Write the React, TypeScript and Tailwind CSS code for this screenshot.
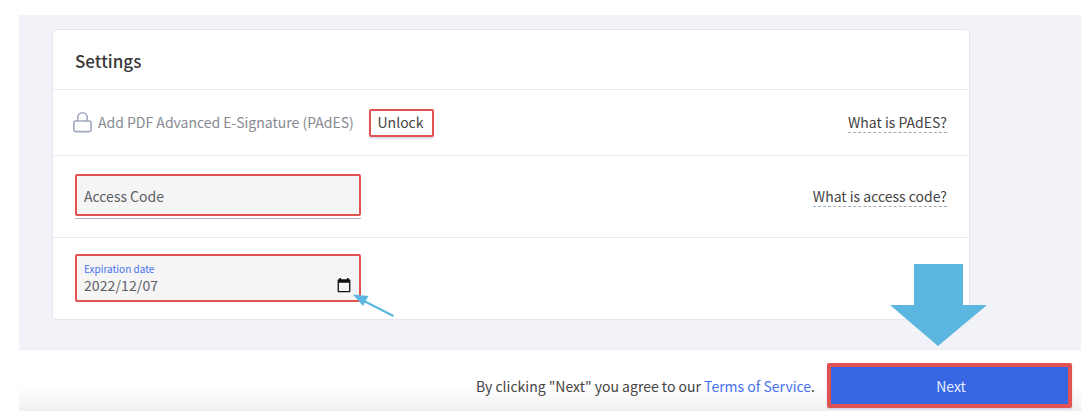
import React from 'react';

function LockIcon() {
  return (
    <svg className="w-5 h-[21px] mb-px shrink-0" viewBox="0 0 20 21" fill="none" stroke="#a0a8bf" strokeWidth="1.6">
      <rect x="0.9" y="9" width="17.2" height="10.6" rx="1.6" />
      <path d="M4.8 9V5.500a4.700 4.700 0 0 1 9.400 0V9" />
    </svg>
  );
}

function CalendarIcon() {
  return (
    <svg className="w-[14px] h-[15px] shrink-0" viewBox="0 0 14 15">
      <path d="M2.4 0h1.6v2H2.4zM10 0h1.6v2H10z" fill="#111" />
      <path d="M2 1.2h10c.8 0 1.4.6 1.4 1.3V13c0 .7-.6 1.3-1.4 1.3H2c-.8 0-1.4-.6-1.4-1.3V2.5c0-.7.6-1.3 1.4-1.3zM1.9 4.8V13h10.2V4.8z" fill="#111" fillRule="evenodd" />
    </svg>
  );
}

function HelpLink({ children, className = '' }: { children: React.ReactNode; className?: string }) {
  return (
    <a href="#" className={`h-[22px] leading-[22px] border-b border-dashed border-[#a5abb8] text-[#444] whitespace-nowrap ${className}`}>
      {children}
    </a>
  );
}

export default function App() {
  return (
    <div className="relative w-[1086px] h-[420px] overflow-hidden bg-white pl-[19px] pt-[15px] pr-[5px] font-['Noto_Sans_CJK_SC','Noto_Sans',sans-serif] text-sm text-[#444]">
      <main className="h-[335px] bg-[#f2f3f8] border-b border-[#eceef4] pl-[33px] pt-[14px]">
        <section className="w-[918px] h-[291px] bg-white border border-[#e3e5ef] rounded">
          <div className="h-[60px] px-[22px] flex items-center border-b border-[#e8e9f1]">
            <h2 className="text-[17px] font-medium leading-6 text-[#383838] pt-[3px]">Settings</h2>
          </div>

          <div className="h-[66px] pl-5 pr-[22px] flex items-center justify-between border-b border-[#e8e9f1]">
            <div className="flex items-center">
              <LockIcon />
              <span className="ml-[5px] w-[256px] leading-5 pb-px text-[#868a91] whitespace-nowrap">Add PDF Advanced E-Signature (PAdES)</span>
              <button className="ml-[15px] w-[65px] h-7 border-2 border-[#e35252] rounded-xs shadow-[0_2px_2px_#dcdfeb] pr-0.5 leading-[22px] pb-0.5 text-[#444]">
                Unlock
              </button>
            </div>
            <HelpLink className="mb-0.5">What is PAdES?</HelpLink>
          </div>

          <div className="h-[82px] px-[22px] pt-[18px] flex justify-between border-b border-[#e8e9f1]">
            <div className="w-[286px] h-[45px] border-b border-[#b0b5cd]">
              <div className="h-[42px] px-[7px] pt-0.5 flex items-center bg-[#f5f5f5] border-2 border-[#e35252] rounded-xs text-[#5c6066]">
                Access Code
              </div>
            </div>
            <HelpLink className="mt-[11px]">What is access code?</HelpLink>
          </div>

          <div className="px-[22px] pt-4">
            <div className="w-[286px] h-12 pl-[7px] pr-[8px] flex justify-between bg-[#f5f5f5] border-2 border-[#e35252] rounded-xs">
              <div className="pt-[5px]">
                <label className="block text-[10px] leading-[15px] text-[#4771ee]">Expiration date</label>
                <span className="block leading-[19px] tracking-[0.1px] text-[#5c6066]">2022/12/07</span>
              </div>
              <div className="pt-[22px]">
                <CalendarIcon />
              </div>
            </div>
          </div>
        </section>
      </main>

      <footer className="h-[61px] flex justify-end pr-[9px] pt-[13px] bg-linear-to-b from-white from-60% to-[#f0f0f0]">
        <p className="mr-3 h-[46px] leading-[46px] whitespace-nowrap">
          By clicking "Next" you agree to our{' '}
          <a href="#" className="text-[#4771ee]">Terms of Service</a>.
        </p>
        <button className="w-[245px] h-[45px] bg-[#3766e3] border-4 border-[#e35252] rounded-xs shadow-[0_1px_2px_#c9cce5] pl-[3px] text-[#e6ecff]">
          Next
        </button>
      </footer>

      {/* callout arrows sit on top of the form */}
      <svg className="absolute inset-0 pointer-events-none" width="1086" height="420" viewBox="0 0 1086 420">
        <path d="M914 264h49v41h24l-49 41-48-41h24z" fill="#5bb7df" />
        <path d="M393.5 316 364 301" stroke="#5bb7df" strokeWidth="2" />
        <path d="M353 294.5l15.5 1.5-5.5 10z" fill="#5bb7df" />
      </svg>
    </div>
  );
}
